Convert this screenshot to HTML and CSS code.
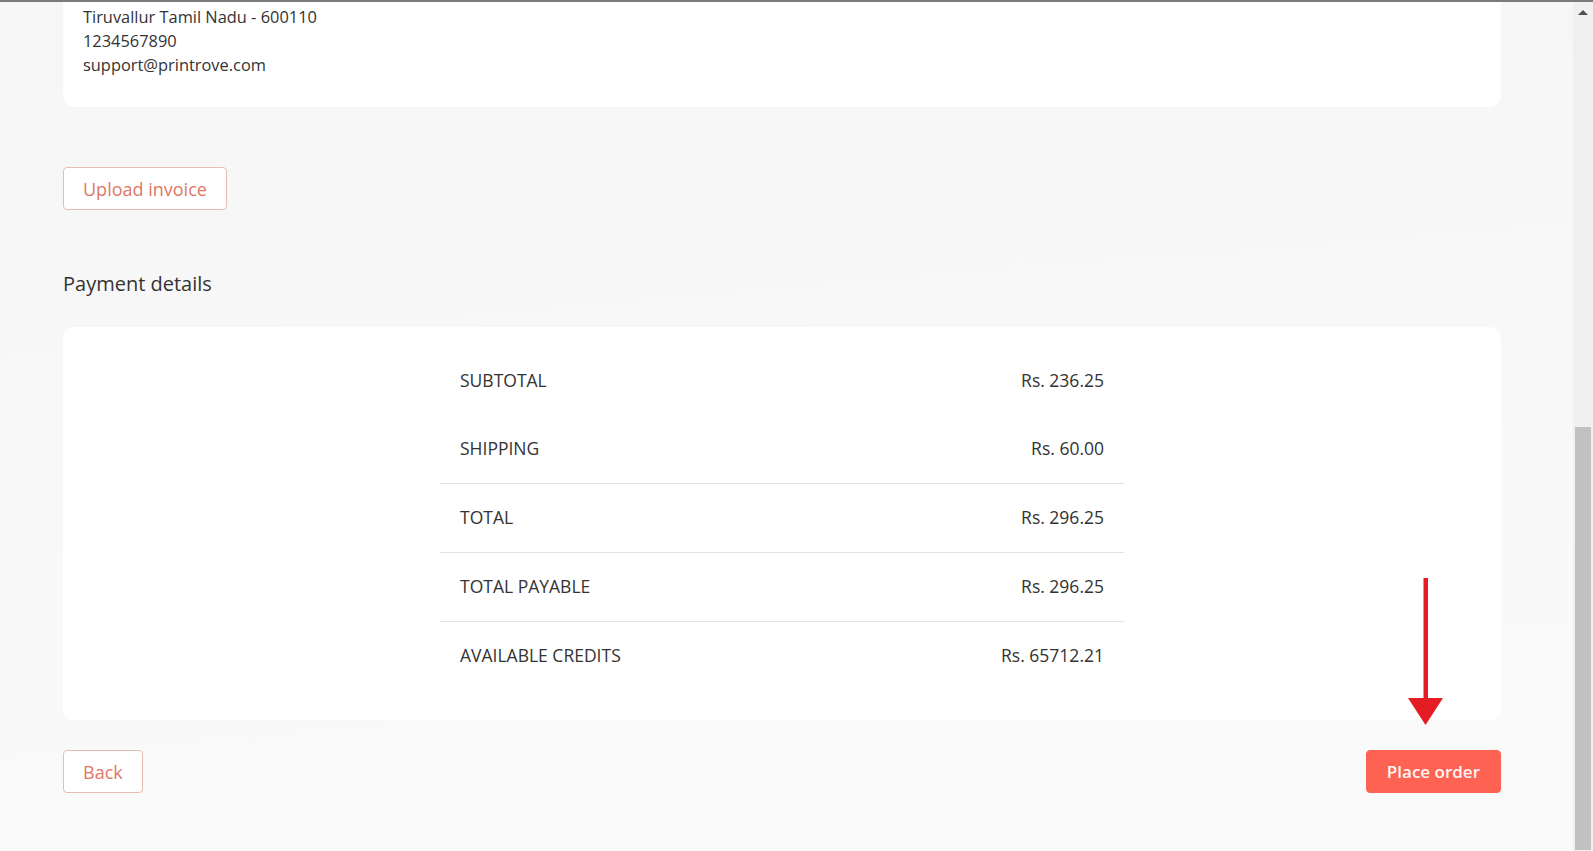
FILE: index.html
```html
<!DOCTYPE html>
<html lang="en">
<head>
<meta charset="utf-8">
<title>Payment details</title>
<link rel="stylesheet" href="styles.css">
</head>
<body>
<div class="screen">
  <div class="topline"></div>
  <main class="page">
    <section class="card address">
      <p>Tiruvallur Tamil Nadu - 600110</p>
      <p>1234567890</p>
      <p>support@printrove.com</p>
    </section>

    <div class="upload-row">
      <button class="btn btn-outline">Upload invoice</button>
    </div>

    <h2 class="section-title">Payment details</h2>

    <section class="card payment">
      <table class="summary">
        <tr class="plain first"><td>SUBTOTAL</td><td class="val">Rs. 236.25</td></tr>
        <tr class="plain second"><td>SHIPPING</td><td class="val">Rs. 60.00</td></tr>
        <tr><td>TOTAL</td><td class="val">Rs. 296.25</td></tr>
        <tr><td>TOTAL PAYABLE</td><td class="val">Rs. 296.25</td></tr>
        <tr><td>AVAILABLE CREDITS</td><td class="val">Rs. 65712.21</td></tr>
      </table>
    </section>

    <div class="actions">
      <button class="btn btn-outline">Back</button>
      <button class="btn btn-primary">Place order</button>
    </div>

    <svg class="annot-arrow" width="40" height="150" viewBox="0 0 40 150" aria-hidden="true">
      <rect x="17.5" y="0" width="4.5" height="122" fill="#e51c23"/>
      <polygon points="2,120 37,120 19.5,147" fill="#e51c23"/>
    </svg>
  </main>
  <div class="scrollbar">
    <div class="sb-arrow up"></div>
    <div class="sb-track"><div class="sb-thumb"></div></div>
  </div>
</div>
</body>
</html>
```
FILE: styles.css
```css
* { box-sizing: border-box; }
html, body { margin: 0; padding: 0; height: 100%; overflow: hidden; }
body {
  font-family: "Open Sans", "Noto Sans", sans-serif;
  color: #3a3a3a;
  background: #f7f7f7;
}
.screen {
  display: flex;
  width: 1593px;
  height: 851px;
  position: relative;
  background: linear-gradient(175deg, #f6f6f6 0%, #f8f8f8 50%, #fafafa 100%);
}
.topline {
  position: absolute;
  left: 0; top: 0; right: 0;
  height: 2px;
  background: #7a7a7a;
  z-index: 3;
}
.page {
  flex: 0 0 1573px;
  padding: 0 72px 0 63px;
  position: relative;
}
.card {
  background: #fff;
  border-radius: 12px;
}
.address {
  border-radius: 0 0 12px 12px;
  padding: 5px 20px 30px;
  font-size: 16.4px;
  line-height: 24px;
  color: #333;
}
.address p { margin: 0; }

.upload-row { margin-top: 60px; }

.btn {
  font-family: "Open Sans", "Noto Sans", sans-serif;
  height: 43px;
  border-radius: 4px;
  font-size: 18px;
  cursor: pointer;
}
.btn-outline {
  background: #fff;
  border: 1px solid #e6bdb6;
  color: #df7767;
  padding: 0 19px;
}
.btn-primary {
  background: #fd6252;
  border: 1px solid #fd6252;
  color: #fff5f2;
  font-size: 17px;
  font-weight: 600;
  padding: 0 20px;
}

.section-title {
  margin: 60px 0 29px;
  font-size: 20px;
  line-height: 28px;
  font-weight: 400;
  color: #333;
}

.payment {
  height: 393px;
  padding-top: 19px;
}
.summary {
  width: 684px;
  margin: 0 0 0 377px;
  border-collapse: collapse;
  font-size: 17.5px;
  color: #333;
}
.summary td {
  height: 69px;
  padding: 0 20px 2px 20px;
  border-top: 1px solid #e2e2e2;
  vertical-align: middle;
}
.summary tr.plain td { border-top: none; padding-bottom: 0; }
.summary tr.first td { height: 68px; }
.summary tr.second td { height: 69px; }
.summary td.val { text-align: right; }

.actions {
  margin-top: 30px;
  display: flex;
  justify-content: space-between;
}

.annot-arrow {
  position: absolute;
  left: 1406px;
  top: 578px;
}

.scrollbar {
  flex: 0 0 20px;
  background: #f0f0f0;
  display: flex;
  flex-direction: column;
  align-items: center;
}
.sb-arrow.up {
  margin-top: 10px;
  width: 0; height: 0;
  border-left: 5px solid transparent;
  border-right: 5px solid transparent;
  border-bottom: 5px solid #505050;
}
.sb-track {
  flex: 1;
  width: 100%;
  position: relative;
}
.sb-thumb {
  position: absolute;
  left: 2px; right: 2px;
  top: 412px;
  bottom: 1px;
  background: #c1c1c1;
}
```
